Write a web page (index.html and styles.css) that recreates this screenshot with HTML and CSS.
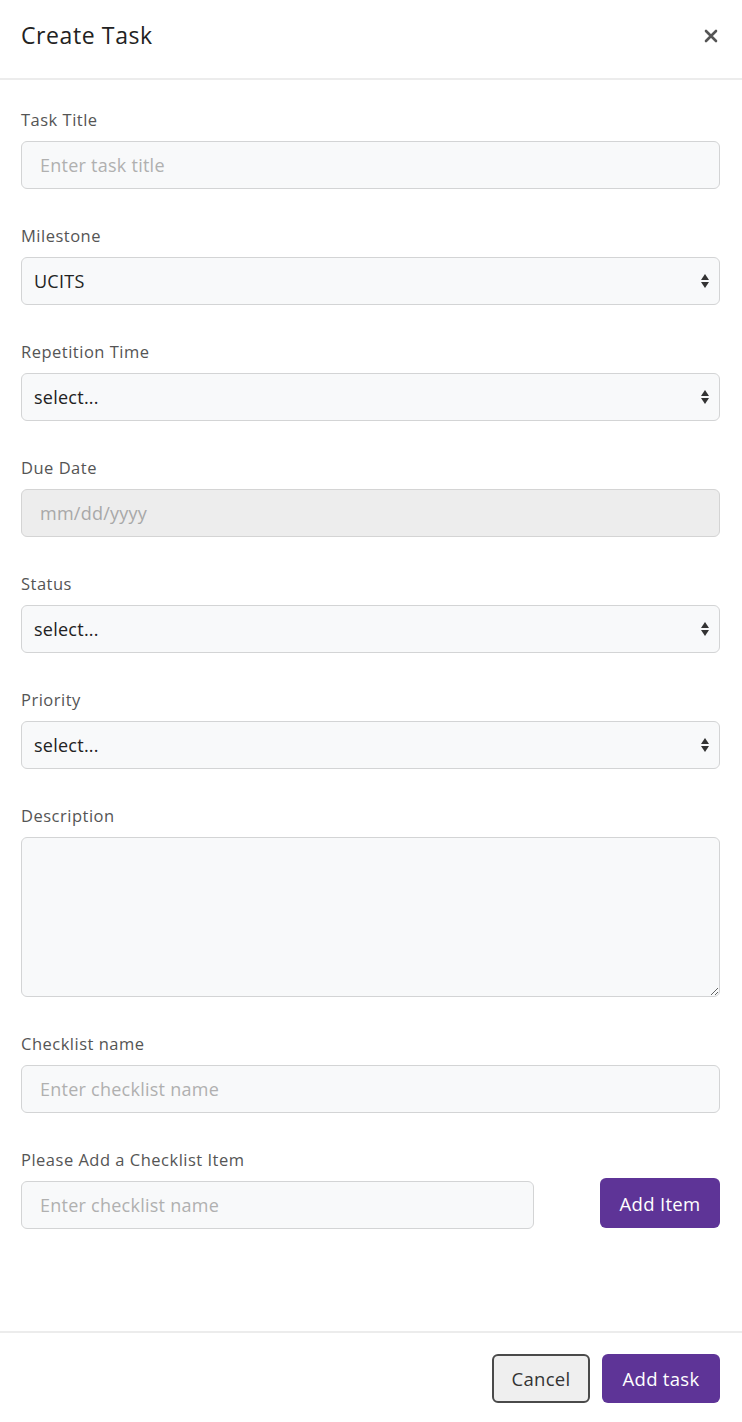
FILE: index.html
```html
<!DOCTYPE html>
<html lang="en">
<head>
<meta charset="utf-8">
<title>Create Task</title>
<link rel="stylesheet" href="styles.css">
</head>
<body>
<div class="modal">
  <header class="modal-header">
    <h1 class="modal-title">Create Task</h1>
    <button class="close" type="button" aria-label="Close">
      <svg width="14" height="14" viewBox="0 0 14 14"><path d="M2 2L12 12M12 2L2 12" stroke="#555" stroke-width="2.6" stroke-linecap="round"/></svg>
    </button>
  </header>
  <main class="modal-body">
    <div class="group">
      <label class="label">Task Title</label>
      <input class="control" type="text" placeholder="Enter task title">
    </div>
    <div class="group">
      <label class="label">Milestone</label>
      <select class="control select"><option>UCITS</option></select>
    </div>
    <div class="group">
      <label class="label">Repetition Time</label>
      <select class="control select"><option>select...</option></select>
    </div>
    <div class="group">
      <label class="label">Due Date</label>
      <input class="control disabled" type="text" placeholder="mm/dd/yyyy" disabled>
    </div>
    <div class="group">
      <label class="label">Status</label>
      <select class="control select"><option>select...</option></select>
    </div>
    <div class="group">
      <label class="label">Priority</label>
      <select class="control select"><option>select...</option></select>
    </div>
    <div class="group">
      <label class="label">Description</label>
      <textarea class="control textarea"></textarea>
    </div>
    <div class="group">
      <label class="label">Checklist name</label>
      <input class="control" type="text" placeholder="Enter checklist name">
    </div>
    <div class="group last">
      <label class="label">Please Add a Checklist Item</label>
      <div class="item-row">
        <input class="control item-input" type="text" placeholder="Enter checklist name">
        <button class="btn btn-primary add-item" type="button">Add Item</button>
      </div>
    </div>
  </main>
  <footer class="modal-footer">
    <button class="btn btn-cancel" type="button">Cancel</button>
    <button class="btn btn-primary add-task" type="button">Add task</button>
  </footer>
</div>
</body>
</html>
```
FILE: styles.css
```css
* { box-sizing: border-box; }
html, body { margin: 0; padding: 0; background: #fff; }
body {
  font-family: "Open Sans", "Lato", "Liberation Sans", sans-serif;
  color: #333;
}
.modal {
  width: 742px;
  height: 1422px;
  display: flex;
  flex-direction: column;
}
.modal-header {
  height: 80px;
  border-bottom: 2px solid #ececec;
  display: flex;
  align-items: center;
  justify-content: space-between;
  padding: 0 21px 8px 21px;
  flex: none;
}
.modal-title {
  margin: 0;
  font-size: 23px;
  font-weight: 400;
  color: #222;
  letter-spacing: 0.6px;
}
.close {
  border: 0;
  background: none;
  padding: 0;
  margin-right: 3px;
  margin-top: 2px;
  display: flex;
}
.modal-body {
  flex: 1;
  padding: 28px 22px 0 21px;
}
.group {
  display: flex;
  flex-direction: column;
  margin-bottom: 35px;
}
.label {
  font-size: 16.5px;
  letter-spacing: 0.5px;
  line-height: 24px;
  color: #555;
  margin-bottom: 9px;
}
.control {
  height: 48px;
  width: 100%;
  border: 1.5px solid #d3d4d5;
  border-radius: 6px;
  background: #f8f9fa;
  font-family: inherit;
  font-size: 18px;
  letter-spacing: 0.25px;
  color: #222;
  padding: 0 18px;
  outline: none;
}
.control::placeholder { color: #b0b0b0; }
.select {
  appearance: none;
  -webkit-appearance: none;
  padding: 0 12px;
  background-image: url("data:image/svg+xml;utf8,<svg xmlns='http://www.w3.org/2000/svg' width='10' height='16' viewBox='0 0 10 16'><path d='M5 1L9 7H1Z' fill='%23333'/><path d='M5 15L9 9H1Z' fill='%23333'/></svg>");
  background-repeat: no-repeat;
  background-position: right 9px center;
  background-size: 10px 16px;
}
.disabled {
  background: #ededed;
  border-color: #d4d4d4;
}
.disabled::placeholder { color: #a8a8a8; }
.textarea {
  height: 160px;
  resize: both;
  padding: 12px 18px;
}
.last .label { margin-bottom: 6px; }
.item-row {
  display: flex;
  align-items: flex-start;
  justify-content: space-between;
}
.item-input {
  width: 513px;
  margin-top: 3px;
}
.btn {
  font-family: inherit;
  font-size: 18.5px;
  letter-spacing: 0.3px;
  border-radius: 6px;
  cursor: pointer;
}
.btn-primary {
  background: #5e3497;
  color: #fff;
  border: 0;
}
.add-item {
  width: 120px;
  height: 50px;
}
.modal-footer {
  flex: none;
  height: 91px;
  border-top: 2px solid #ececec;
  display: flex;
  justify-content: flex-end;
  align-items: center;
  gap: 12px;
  padding: 2px 22px 0 0;
}
.btn-cancel {
  width: 98px;
  height: 49px;
  background: #efefef;
  border: 2px solid #4a4a4a;
  color: #333;
}
.add-task {
  width: 118px;
  height: 49px;
}
```
